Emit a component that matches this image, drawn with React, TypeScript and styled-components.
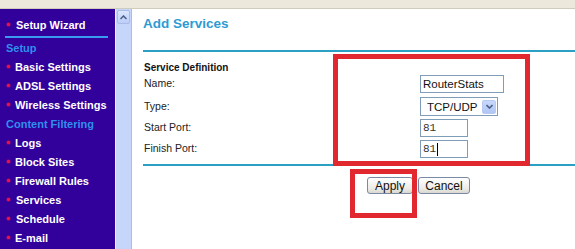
import React from "react";
import styled, { createGlobalStyle } from "styled-components";

const Global = createGlobalStyle`
  html, body { margin: 0; padding: 0; background: #ffffff; }
  body { font-family: "Liberation Sans", Arial, sans-serif; width: 575px; height: 249px; overflow: hidden; }
`;

const Page = styled.div`
  position: relative;
  width: 575px;
  height: 249px;
  display: flex;
  flex-direction: column;
  overflow: hidden;
`;

const TopStrip = styled.div`
  height: 8px;
  background: #ece9dc;
  border-bottom: 1px solid #cfcbbd;
  flex: none;
`;

const Main = styled.div`
  flex: 1;
  display: flex;
  min-height: 0;
`;

const Sidebar = styled.nav`
  width: 115px;
  flex: none;
  background: #32009a;
  padding-top: 6px;
  box-sizing: border-box;
  display: flex;
  flex-direction: column;
`;

const NavItem = styled.div<{ $indent?: number }>`
  height: 19px;
  display: flex;
  align-items: center;
  padding-left: 7px;
  font-size: 11px;
  font-weight: bold;
  color: #ffffff;
  white-space: nowrap;
  &::before {
    content: "";
    width: 3px;
    height: 3px;
    border-radius: 1px;
    background: #e8124c;
    box-shadow: 0 0 1px 0.5px rgba(232, 18, 76, 0.6);
    margin-right: ${(p) => p.$indent ?? 5}px;
    flex: none;
  }
`;

const NavSection = styled.div`
  height: 19px;
  display: flex;
  align-items: center;
  padding-left: 6px;
  font-size: 11px;
  font-weight: bold;
  color: #2f8fef;
  white-space: nowrap;
`;

const NavRule = styled.div`
  height: 2px;
  margin: 2px 7px 0 5px;
  background: #3a9af0;
  flex: none;
`;

const Scrollbar = styled.div`
  width: 17px;
  flex: none;
  background: #c6d6fb;
  border-left: 1px solid #e9effd;
  border-right: 1px solid #a9bcea;
  box-sizing: border-box;
  padding: 1px 1px 0 1px;
  display: flex;
  flex-direction: column;
`;

const ScrollButton = styled.div`
  height: 14px;
  border: 1px solid #a8bbe9;
  border-radius: 2px;
  background: linear-gradient(#dbe5fd, #bccdf8);
  display: flex;
  align-items: center;
  justify-content: center;
  box-sizing: border-box;
`;

const Content = styled.main`
  flex: 1;
  padding-left: 11px;
  display: flex;
  flex-direction: column;
`;

const Title = styled.h1`
  margin: 6px 0 0 0;
  font-size: 13.5px;
  line-height: 18px;
  font-weight: bold;
  color: #2e9bd2;
`;

const Rule = styled.div<{ $top: number }>`
  height: 2px;
  margin-top: ${(p) => p.$top}px;
  background: #2ba0c2;
  flex: none;
`;

const FormRow = styled.div<{ $h: number; $top: number }>`
  display: grid;
  grid-template-columns: 277px auto;
  align-items: center;
  height: ${(p) => p.$h}px;
  margin-top: ${(p) => p.$top}px;
`;

const SectionLabel = styled.div`
  font-size: 10px;
  font-weight: bold;
  color: #111;
  padding-left: 1px;
`;

const Label = styled.div`
  font-size: 10.5px;
  color: #222;
  padding-left: 1px;
  padding-bottom: 2px;
`;

const TextBox = styled.div<{ $w: number; $mono?: boolean }>`
  width: ${(p) => p.$w}px;
  height: 18px;
  box-sizing: border-box;
  border: 1px solid #7f9db9;
  background: #fff;
  display: flex;
  align-items: center;
  padding-left: 2px;
  font-family: ${(p) => (p.$mono ? '"Liberation Mono", "Courier New", monospace' : '"Liberation Sans", Arial, sans-serif')};
  font-size: ${(p) => (p.$mono ? "11px" : "11.5px")};
  color: ${(p) => (p.$mono ? "#333" : "#111")};
`;

const Caret = styled.span`
  display: inline-block;
  width: 1px;
  height: 13px;
  background: #000;
  margin-left: 1px;
`;

const SelectBox = styled.div`
  width: 78px;
  height: 19px;
  box-sizing: border-box;
  border: 1px solid #7f9db9;
  background: #fff;
  display: flex;
  align-items: center;
  justify-content: space-between;
  padding: 0 1px 0 6px;
  font-size: 11.5px;
  color: #111;
`;

const DropButton = styled.div`
  width: 14px;
  height: 14px;
  border-radius: 2px;
  background: linear-gradient(#c9d8fb, #b0c6f5);
  border: 1px solid #b8caf3;
  box-sizing: border-box;
  display: flex;
  align-items: center;
  justify-content: center;
`;

const ButtonRow = styled.div`
  display: flex;
  gap: 5px;
  margin: 11px 0 0 224px;
`;

const Button = styled.button<{ $w: number }>`
  width: ${(p) => p.$w}px;
  height: 17px;
  padding: 0;
  border: 1px solid #7a8aa4;
  border-radius: 3px;
  background: linear-gradient(#ffffff, #ecebe6 70%, #d9d7cf);
  font-family: "Liberation Sans", Arial, sans-serif;
  font-size: 12px;
  color: #111;
  line-height: 14px;
`;

const Annotation = styled.div<{ $x: number; $y: number; $w: number; $h: number }>`
  position: absolute;
  left: ${(p) => p.$x}px;
  top: ${(p) => p.$y}px;
  width: ${(p) => p.$w}px;
  height: ${(p) => p.$h}px;
  border: 5px solid #e0282e;
  box-sizing: border-box;
  pointer-events: none;
`;

const navItems: Array<{ kind: "item" | "section"; text: string; indent?: number }> = [
  { kind: "section", text: "Setup" },
  { kind: "item", text: "Basic Settings" },
  { kind: "item", text: "ADSL Settings" },
  { kind: "item", text: "Wireless Settings" },
  { kind: "section", text: "Content Filtering" },
  { kind: "item", text: "Logs" },
  { kind: "item", text: "Block Sites" },
  { kind: "item", text: "Firewall Rules" },
  { kind: "item", text: "Services", indent: 6 },
  { kind: "item", text: "Schedule", indent: 6 },
  { kind: "item", text: "E-mail" },
];

export default function App() {
  return (
    <Page>
      <Global />
      <TopStrip />
      <Main>
        <Sidebar>
          <NavItem $indent={6}>Setup Wizard</NavItem>
          <NavRule />
          {navItems.map((n) =>
            n.kind === "section" ? (
              <NavSection key={n.text}>{n.text}</NavSection>
            ) : (
              <NavItem key={n.text} $indent={n.indent}>
                {n.text}
              </NavItem>
            )
          )}
        </Sidebar>
        <Scrollbar>
          <ScrollButton>
            <svg width="7" height="5" viewBox="0 0 7 5">
              <path d="M0.5 4 L3.5 1 L6.5 4" fill="none" stroke="#4b5f86" strokeWidth="1.5" />
            </svg>
          </ScrollButton>
        </Scrollbar>
        <Content>
          <Title>Add Services</Title>
          <Rule $top={17} />
          <FormRow $h={14} $top={8}>
            <SectionLabel>Service Definition</SectionLabel>
            <span />
          </FormRow>
          <FormRow $h={18} $top={1}>
            <Label>Name:</Label>
            <TextBox $w={84}>RouterStats</TextBox>
          </FormRow>
          <FormRow $h={19} $top={4}>
            <Label>Type:</Label>
            <SelectBox>
              <span>TCP/UDP</span>
              <DropButton>
                <svg width="7" height="5" viewBox="0 0 7 5">
                  <path d="M0.5 1 L3.5 4 L6.5 1" fill="none" stroke="#4d6185" strokeWidth="1.6" />
                </svg>
              </DropButton>
            </SelectBox>
          </FormRow>
          <FormRow $h={18} $top={3}>
            <Label>Start Port:</Label>
            <TextBox $w={48} $mono>
              81
            </TextBox>
          </FormRow>
          <FormRow $h={18} $top={3}>
            <Label>Finish Port:</Label>
            <TextBox $w={48} $mono>
              81
              <Caret />
            </TextBox>
          </FormRow>
          <Rule $top={6} />
          <ButtonRow>
            <Button $w={46}>Apply</Button>
            <Button $w={52}>Cancel</Button>
          </ButtonRow>
        </Content>
      </Main>
      <Annotation $x={333} $y={54} $w={197} $h={112} />
      <Annotation $x={350} $y={169} $w={67} $h={49} />
    </Page>
  );
}
